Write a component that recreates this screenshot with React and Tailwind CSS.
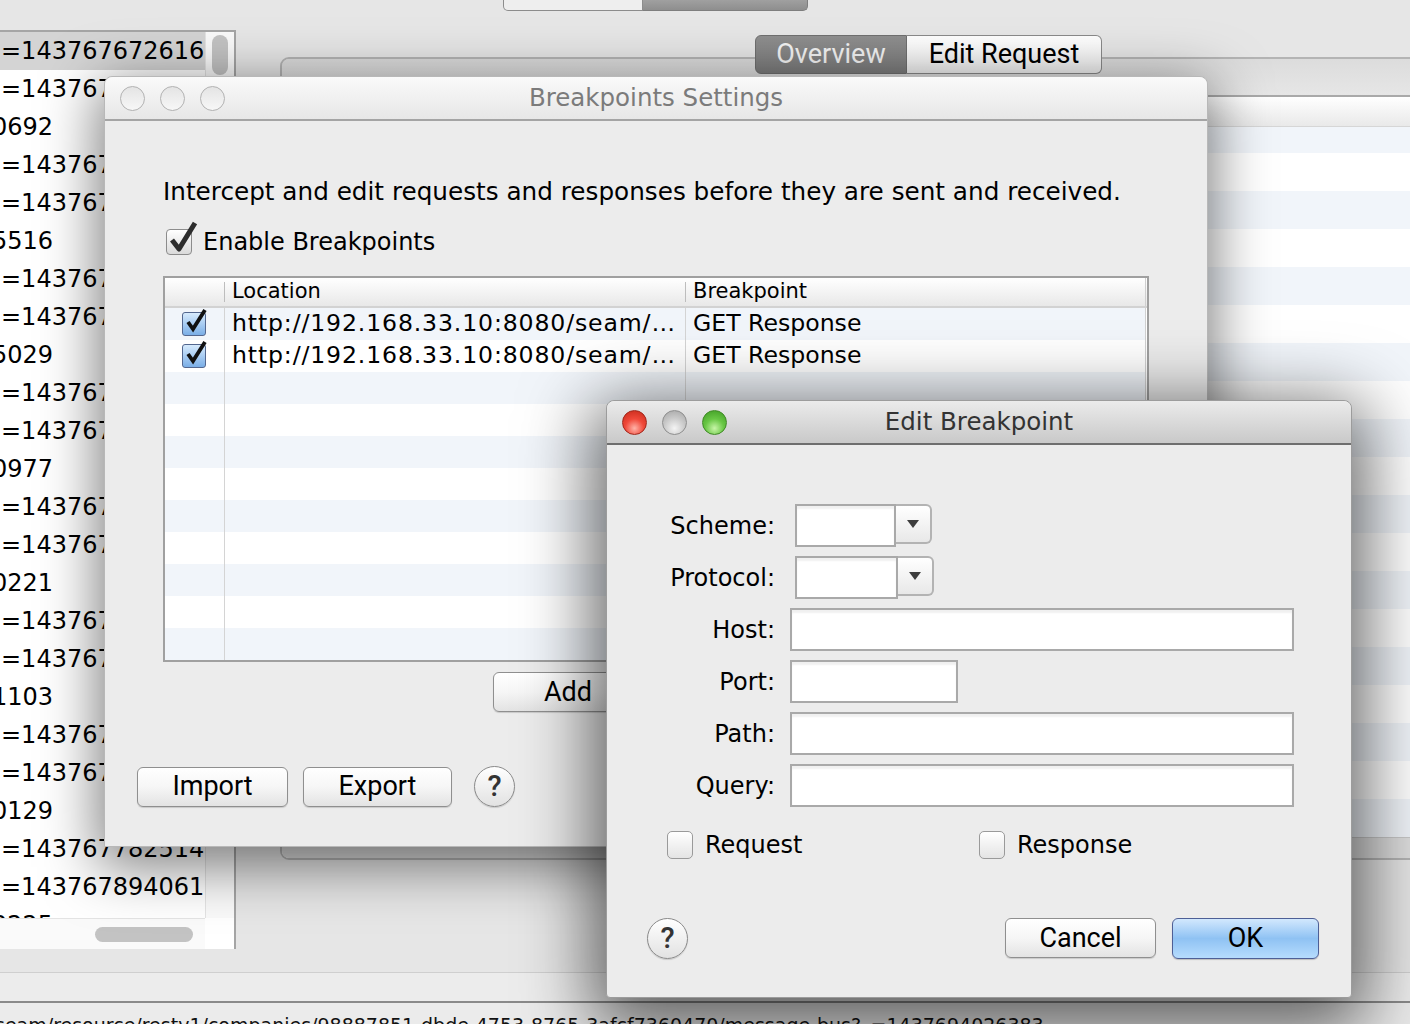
import React from 'react';

const listRows = [
  { t: '=143767672616', sel: true },
  { t: '=143767699151' },
  { t: '0692', cut: true },
  { t: '=143767704233' },
  { t: '=143767711870' },
  { t: '5516', cut: true },
  { t: '=143767720394' },
  { t: '=143767728811' },
  { t: '5029', cut: true },
  { t: '=143767735502' },
  { t: '=143767741687' },
  { t: '0977', cut: true },
  { t: '=143767748320' },
  { t: '=143767752914' },
  { t: '0221', cut: true },
  { t: '=143767760044' },
  { t: '=143767766738' },
  { t: '1103', cut: true },
  { t: '=143767771209' },
  { t: '=143767775563' },
  { t: '0129', cut: true },
  { t: '=143767782514' },
  { t: '=143767894061' },
  { t: '0225', cut: true },
];

const breakpoints = [
  { url: 'http://192.168.33.10:8080/seam/…', type: 'GET Response' },
  { url: 'http://192.168.33.10:8080/seam/…', type: 'GET Response' },
];

function Light({ kind }) {
  if (kind === 'red')
    return <span className="block w-[25px] h-[25px] rounded-full border border-[#a2261a] bg-[radial-gradient(circle_at_50%_75%,#ffb3a8_0%,#f0493a_45%,#c42818_100%)]" />;
  if (kind === 'green')
    return <span className="block w-[25px] h-[25px] rounded-full border border-[#3f8a25] bg-[radial-gradient(circle_at_50%_75%,#c8f5a8_0%,#69c745_45%,#3d9a22_100%)]" />;
  if (kind === 'gray')
    return <span className="block w-[25px] h-[25px] rounded-full border border-[#8e8e8e] bg-[radial-gradient(circle_at_50%_75%,#f4f4f4_0%,#c9c9c9_50%,#a3a3a3_100%)]" />;
  return <span className="block w-[25px] h-[25px] rounded-full border border-[#b2b2b2] bg-gradient-to-b from-[#e4e4e4] to-[#f7f7f7]" />;
}

function MacButton({ label, w }) {
  return (
    <div className={`${w} h-[40px] rounded-[6px] border-[1.5px] border-[#8f8f8f] bg-gradient-to-b from-white via-[#f6f6f6] to-[#e3e3e3] flex items-center justify-center text-[27px] text-black font-['Roboto',sans-serif] shadow-[0_1px_1px_rgba(0,0,0,0.15)]`}>
      {label}
    </div>
  );
}

function HelpButton() {
  return (
    <div className="w-[41px] h-[41px] rounded-full border-[1.5px] border-[#8a8a8a] bg-gradient-to-b from-white to-[#e2e2e2] flex items-center justify-center text-[29px] font-medium text-[#333] font-['Roboto',sans-serif] shadow-[0_1px_1px_rgba(0,0,0,0.15)]">
      ?
    </div>
  );
}

function Field({ w }) {
  return <div className={`${w} h-[43px] bg-white border-2 border-[#a9a9a9] shadow-[inset_0_3px_2px_rgba(0,0,0,0.06)]`} />;
}

function Combo({ text, btn }) {
  return (
    <div className="flex h-[43px] ml-[5px]">
      <div className={`${text} h-full bg-white border-2 border-[#a9a9a9] shadow-[inset_0_3px_2px_rgba(0,0,0,0.06)]`} />
      <div className={`${btn} h-[40px] rounded-r-[6px] border-2 border-l-0 border-[#b3b3b3] bg-gradient-to-b from-white to-[#e8e8e8] flex items-center justify-center`}>
        <svg width="14" height="10" viewBox="0 0 14 10"><path d="M1 1 H13 L7 9 Z" fill="#3d3d3d" /></svg>
      </div>
    </div>
  );
}

function BlankBox() {
  return <span className="block w-[26px] h-[28px] rounded-[5px] border-[1.5px] border-[#9a9a9a] bg-gradient-to-b from-white to-[#e4e4e4]" />;
}

export default function App() {
  const rightRows = Array.from({ length: 18 });
  const tableRows = Array.from({ length: 11 });

  return (
    <div className="relative w-[1410px] h-[1024px] overflow-hidden bg-[#e6e6e6] font-['DejaVu_Sans',sans-serif] text-black">
      {/* top segmented control (clipped) */}
      <div className="absolute left-[503px] top-0 flex h-[11px]">
        <div className="w-[140px] h-full bg-[#eeeeee] border border-t-0 border-[#8c8c8c] rounded-bl-[5px]" />
        <div className="w-[165px] h-full bg-gradient-to-b from-[#a0a0a0] to-[#8e8e8e] border border-t-0 border-l-0 border-[#7e7e7e] rounded-br-[5px]" />
      </div>

      {/* left request list */}
      <div className="absolute left-0 top-[30px] w-[236px] h-[919px] bg-white border-t-2 border-r-2 border-[#a5a5a5] flex flex-col">
        <div className="flex h-[886px]">
          <div className="w-[205px] overflow-hidden">
            {listRows.map((r, i) => (
              <div key={i} className={`h-[38px] flex items-center text-[24px] whitespace-nowrap ${r.sel ? 'bg-[#d4d4d4]' : ''}`}>
                <span className={r.cut ? '-ml-[8px]' : 'ml-[1px]'}>{r.t}</span>
              </div>
            ))}
          </div>
          <div className="w-[29px] bg-[#fafafa] border-l border-[#e4e4e4] pt-[3px] flex justify-center">
            <div className="w-[16px] h-[40px] rounded-full bg-[#c3c3c3]" />
          </div>
        </div>
        <div className="flex flex-1">
          <div className="w-[205px] bg-[#fafafa] border-t border-[#e4e4e4] flex items-center pl-[95px]">
            <div className="w-[98px] h-[15px] rounded-full bg-[#c3c3c3]" />
          </div>
          <div className="flex-1 bg-white" />
        </div>
      </div>

      {/* line under list area */}
      <div className="absolute left-0 top-[972px] w-[1410px] h-[30px] border-t border-[#cfcfcf] bg-[#ececec]" />

      {/* status bar */}
      <div className="absolute left-0 top-[1001px] w-[1410px] h-[23px] border-t-2 border-[#8a8a8a] bg-[#ebebeb] overflow-hidden">
        <div className="pt-[10px] text-[19px] leading-[24px] whitespace-nowrap -ml-[5px] text-[#111]">
          seam/resource/restv1/companies/98887851-dbde-4753-8765-3afcf7360470/message-bus?_=1437694026383
        </div>
      </div>

      {/* right main panel */}
      <div className="absolute left-[280px] top-[57px] w-[1140px] h-[803px] rounded-l-[9px] border-2 border-[#b4b4b4] bg-[#e3e3e3] flex flex-col overflow-hidden">
        <div className="h-[36px] shrink-0 bg-gradient-to-b from-[#dcdcdc] to-[#e6e6e6]" />
        <div className="flex-1 bg-white border-t-2 border-[#a9a9a9] flex flex-col">
          <div className="h-[30px] shrink-0 bg-gradient-to-b from-white to-[#e9e9e9] border-b border-[#d6d6d6]" />
          <div className="h-[26px] shrink-0 bg-[#f1f5fa]" />
          {rightRows.map((_, i) => (
            <div key={i} className={`h-[38px] shrink-0 ${i % 2 === 0 ? 'bg-white' : 'bg-[#f1f5fa]'}`} />
          ))}
          <div className="flex-1 bg-[#dedede] border-t border-[#c8c8c8]" />
        </div>
      </div>

      {/* tabs */}
      <div className="absolute left-[755px] top-[35px] flex h-[39px] font-['Roboto',sans-serif] text-[27px]">
        <div className="w-[152px] h-full rounded-l-[6px] border border-[#6f6f6f] bg-gradient-to-b from-[#8f8f8f] to-[#7c7c7c] text-[#f4f4f4] flex items-center justify-center">
          Overview
        </div>
        <div className="w-[195px] h-full rounded-r-[6px] border border-l-0 border-[#8a8a8a] bg-gradient-to-b from-white to-[#f0f0f0] flex items-center justify-center">
          Edit Request
        </div>
      </div>

      {/* Breakpoints Settings window */}
      <div className="absolute left-[104px] top-[76px] w-[1104px] h-[771px] rounded-t-[8px] border border-[#b8b8b8] bg-[#ececec] shadow-[0_14px_55px_6px_rgba(0,0,0,0.5)] flex flex-col">
        <div className="h-[44px] shrink-0 rounded-t-[8px] border-b-2 border-[#a4a4a4] bg-gradient-to-b from-[#fafafa] to-[#e7e7e7] grid grid-cols-[1fr_auto_1fr] items-center">
          <div className="flex gap-[15px] pl-[15px]">
            <Light /><Light /><Light />
          </div>
          <div className="text-[24.5px] text-[#7b7b7b]">Breakpoints Settings</div>
          <div />
        </div>

        <div className="ml-[58px] mt-[56px] text-[24.7px] leading-[30px] whitespace-nowrap">
          Intercept and edit requests and responses before they are sent and received.
        </div>

        <div className="ml-[61px] mt-[20px] h-[30px] flex items-center gap-[11px]">
          <div className="relative w-[26px] h-[26px] rounded-[4px] border-[1.5px] border-[#8c8c8c] bg-gradient-to-b from-white to-[#dadada]">
            <svg className="absolute -top-[7px] left-[1px] overflow-visible" width="30" height="30" viewBox="0 0 30 30">
              <path d="M4 17 L11 26 L27 0" fill="none" stroke="#2d2d2d" strokeWidth="5" strokeLinejoin="round" />
            </svg>
          </div>
          <span className="text-[24px]">Enable Breakpoints</span>
        </div>

        {/* breakpoints table */}
        <div className="ml-[58px] mt-[19px] w-[986px] h-[386px] border-2 border-[#a0a0a0] bg-white flex flex-col overflow-hidden">
          <div className="h-[30px] shrink-0 flex bg-gradient-to-b from-white to-[#e8e8e8] border-b-2 border-[#d2d2d2] text-[21px]">
            <div className="w-[60px] h-full flex items-center justify-end">
              <span className="w-px h-[20px] bg-[#bdbdbd]" />
            </div>
            <div className="w-[461px] h-full flex items-center pl-[7px] justify-between">
              <span>Location</span>
              <span className="w-px h-[20px] bg-[#bdbdbd]" />
            </div>
            <div className="w-[460px] h-full flex items-center pl-[7px] border-r border-[#cfcfcf]">Breakpoint</div>
          </div>
          <div className="flex-1 flex flex-col w-[981px] border-r border-[#d0d0d0]">
            {tableRows.map((_, i) => {
              const bp = breakpoints[i];
              return (
                <div key={i} className={`h-[32px] shrink-0 flex text-[23.6px] ${i % 2 === 0 ? 'bg-[#f1f5fa]' : 'bg-white'}`}>
                  <div className="w-[60px] h-full border-r border-[#d4d4d4] flex items-center pl-[17px]">
                    {bp && (
                      <div className="relative w-[24px] h-[24px] rounded-[3px] border-[1.5px] border-[#53678f] bg-gradient-to-b from-[#d7ebfd] to-[#7aaee6]">
                        <svg className="absolute -top-[4px] left-[1px] overflow-visible" width="24" height="24" viewBox="0 0 24 24">
                          <path d="M4 13 L9 20 L21 1" fill="none" stroke="#111" strokeWidth="3.8" />
                        </svg>
                      </div>
                    )}
                  </div>
                  <div className="w-[461px] h-full border-r border-[#d4d4d4] flex items-center pl-[7px] whitespace-nowrap overflow-hidden tracking-[0.85px]">
                    {bp && bp.url}
                  </div>
                  <div className="flex-1 h-full flex items-center pl-[7px] whitespace-nowrap">
                    {bp && bp.type}
                  </div>
                </div>
              );
            })}
          </div>
        </div>

        <div className="ml-[388px] mt-[10px] flex gap-[16px]">
          <MacButton label="Add" w="w-[150px]" />
          <MacButton label="Edit" w="w-[150px]" />
          <MacButton label="Remove" w="w-[150px]" />
        </div>

        <div className="ml-[32px] mt-[54px] flex items-center">
          <MacButton label="Import" w="w-[151px]" />
          <div className="ml-[15px]"><MacButton label="Export" w="w-[149px]" /></div>
          <div className="ml-[22px]"><HelpButton /></div>
        </div>
      </div>

      {/* Edit Breakpoint window */}
      <div className="absolute left-[606px] top-[400px] w-[746px] h-[598px] rounded-t-[8px] rounded-b-[4px] border border-[#9c9c9c] bg-[#ececec] shadow-[0_18px_70px_14px_rgba(0,0,0,0.6)] flex flex-col">
        <div className="h-[44px] shrink-0 rounded-t-[8px] border-b-2 border-[#6e6e6e] bg-gradient-to-b from-[#ebebeb] to-[#c9c9c9] grid grid-cols-[1fr_auto_1fr] items-center">
          <div className="flex gap-[15px] pl-[15px]">
            <Light kind="red" /><Light kind="gray" /><Light kind="green" />
          </div>
          <div className="text-[24.5px] text-[#333]">Edit Breakpoint</div>
          <div />
        </div>

        <div className="pt-[59px] flex flex-col gap-[9px] text-[24px]">
          <div className="flex items-center">
            <div className="w-[168px] text-right mr-[15px]">Scheme:</div>
            <Combo text="w-[101px]" btn="w-[36px]" />
          </div>
          <div className="flex items-center">
            <div className="w-[168px] text-right mr-[15px]">Protocol:</div>
            <Combo text="w-[103px]" btn="w-[36px]" />
          </div>
          <div className="flex items-center">
            <div className="w-[168px] text-right mr-[15px]">Host:</div>
            <Field w="w-[504px]" />
          </div>
          <div className="flex items-center">
            <div className="w-[168px] text-right mr-[15px]">Port:</div>
            <Field w="w-[168px]" />
          </div>
          <div className="flex items-center">
            <div className="w-[168px] text-right mr-[15px]">Path:</div>
            <Field w="w-[504px]" />
          </div>
          <div className="flex items-center">
            <div className="w-[168px] text-right mr-[15px]">Query:</div>
            <Field w="w-[504px]" />
          </div>
        </div>

        <div className="mt-[24px] pl-[60px] flex items-center text-[24px] h-[28px]">
          <div className="w-[312px] flex items-center gap-[12px]">
            <BlankBox />
            <span>Request</span>
          </div>
          <div className="flex items-center gap-[12px]">
            <BlankBox />
            <span>Response</span>
          </div>
        </div>

        <div className="mt-[59px] pl-[40px] pr-[32px] flex items-center justify-between">
          <HelpButton />
          <div className="flex gap-[16px]">
            <MacButton label="Cancel" w="w-[151px]" />
            <div className="w-[147px] h-[41px] rounded-[6px] border-[1.5px] border-[#4e5f96] bg-gradient-to-b from-[#d2e8fd] via-[#8fc2f3] to-[#b6dcfd] flex items-center justify-center text-[27px] font-['Roboto',sans-serif] shadow-[0_1px_1px_rgba(0,0,0,0.2)]">
              OK
            </div>
          </div>
        </div>
      </div>
    </div>
  );
}
